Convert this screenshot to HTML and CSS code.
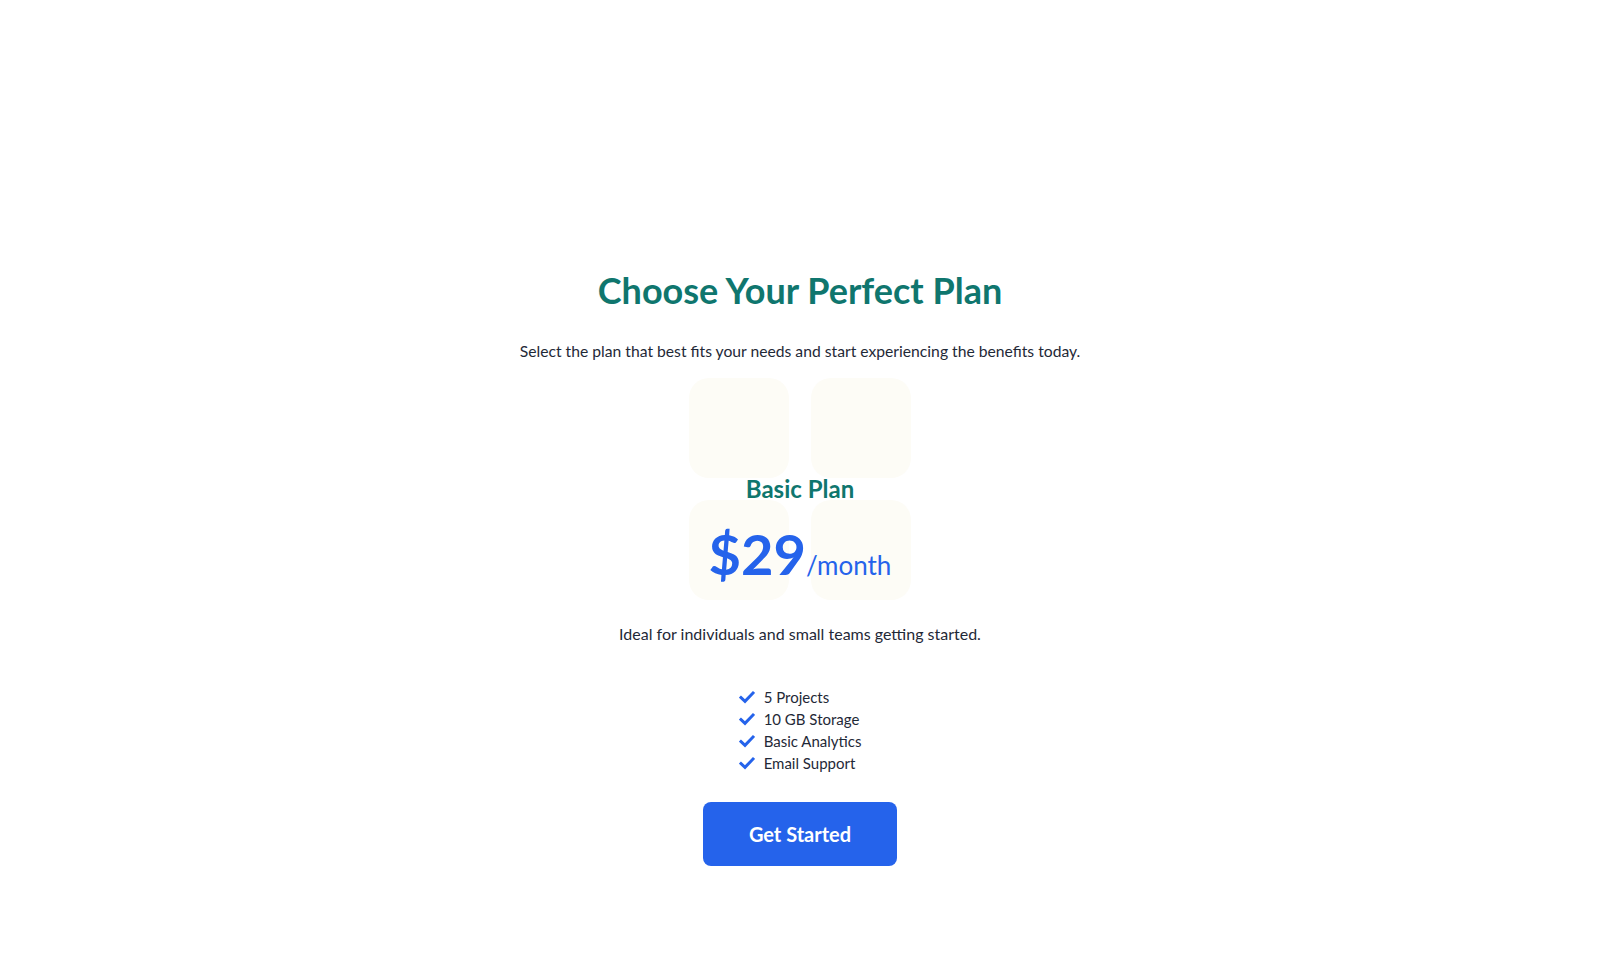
FILE: index.html
```html
<!DOCTYPE html>
<html lang="en">
<head>
<meta charset="utf-8">
<title>Choose Your Perfect Plan</title>
<link rel="stylesheet" href="styles.css">
</head>
<body>
<main class="pricing">
  <h1 class="pricing-title">Choose Your Perfect Plan</h1>
  <p class="pricing-sub">Select the plan that best fits your needs and start experiencing the benefits today.</p>
  <section class="plan">
    <div class="plan-head">
      <div class="tiles">
        <span class="tile"></span><span class="tile"></span>
        <span class="tile"></span><span class="tile"></span>
      </div>
      <div class="plan-overlay">
        <h2 class="plan-name">Basic Plan</h2>
        <div class="plan-price"><span class="amount">$29</span><span class="period">/month</span></div>
      </div>
    </div>
    <p class="plan-desc">Ideal for individuals and small teams getting started.</p>
    <ul class="features">
      <li><svg class="check" viewBox="0 0 16 16"><path d="M2 8.6 L6 12.4 L14 4"/></svg>5 Projects</li>
      <li><svg class="check" viewBox="0 0 16 16"><path d="M2 8.6 L6 12.4 L14 4"/></svg>10 GB Storage</li>
      <li><svg class="check" viewBox="0 0 16 16"><path d="M2 8.6 L6 12.4 L14 4"/></svg>Basic Analytics</li>
      <li><svg class="check" viewBox="0 0 16 16"><path d="M2 8.6 L6 12.4 L14 4"/></svg>Email Support</li>
    </ul>
    <button class="cta">Get Started</button>
  </section>
</main>
</body>
</html>
```
FILE: styles.css
```css
* { box-sizing: border-box; }
html, body { margin: 0; padding: 0; background: #ffffff; }
body {
  font-family: "Lato", "Inter", sans-serif;
  color: #1f2937;
}
.pricing {
  display: flex;
  flex-direction: column;
  align-items: center;
  padding-top: 268px;
}
.pricing-title {
  margin: 0;
  font-size: 36px;
  line-height: 44px;
  font-weight: 700;
  color: #0f766e;
}
.pricing-sub {
  margin: 27px 0 0;
  font-size: 15.7px;
  line-height: 24px;
  color: #1f2937;
}
.plan {
  display: flex;
  flex-direction: column;
  align-items: center;
}
.plan-head {
  position: relative;
  margin-top: 15px;
}
.tiles {
  display: grid;
  grid-template-columns: 100px 100px;
  grid-auto-rows: 100px;
  gap: 22px;
}
.tile {
  background: #fdfcf6;
  border-radius: 20px;
}
.plan-overlay {
  position: absolute;
  left: -60px;
  right: -60px;
  top: 96px;
  display: flex;
  flex-direction: column;
  align-items: center;
}
.plan-name {
  margin: 0;
  font-size: 24px;
  line-height: 30px;
  font-weight: 700;
  color: #0f766e;
}
.plan-price {
  display: flex;
  align-items: baseline;
  color: #2563eb;
  margin-top: 18px;
}
.amount {
  font-size: 56px;
  line-height: 64px;
  font-weight: 700;
}
.period {
  font-size: 26px;
  font-weight: 400;
  margin-left: 0;
}
.plan-desc {
  margin: 22px 0 0;
  font-size: 16px;
  line-height: 24px;
}
.features {
  list-style: none;
  margin: 40px 0 0;
  padding: 0;
  display: flex;
  flex-direction: column;
}
.features li {
  display: flex;
  align-items: center;
  font-size: 15px;
  line-height: 22px;
}
.check {
  width: 16px;
  height: 16px;
  margin-right: 9px;
  fill: none;
  stroke: #2563eb;
  stroke-width: 3;
  stroke-linecap: square;
}
.cta {
  margin-top: 28px;
  width: 194px;
  height: 64px;
  border: none;
  border-radius: 8px;
  background: #2563eb;
  color: #ffffff;
  font-family: inherit;
  font-size: 20px;
  font-weight: 700;
  cursor: pointer;
}
```
